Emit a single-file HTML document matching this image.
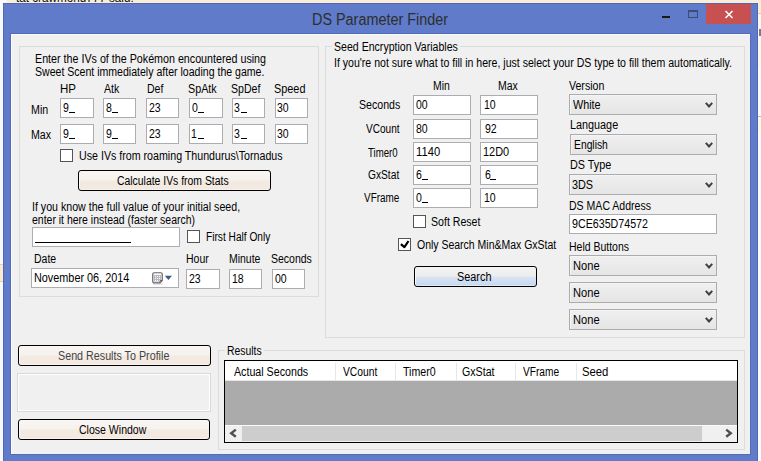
<!DOCTYPE html>
<html><head><meta charset="utf-8">
<style>
*{box-sizing:border-box;margin:0;padding:0}
html,body{width:761px;height:461px;overflow:hidden;background:#f9f9fa;font-family:"Liberation Sans",sans-serif;font-size:12px;color:#000}
.a{position:absolute}
.t{position:absolute;white-space:pre;line-height:14px;font-size:12px;transform-origin:0 0}
.tb{position:absolute;background:#fff;border:1px solid #abadb3;height:20px}
.cb{position:absolute;height:21px;border:1px solid #acacac;background:linear-gradient(#f0f0f0,#e5e5e5);box-shadow:inset 1px 1px 0 #f5f5f5}
.cb svg{position:absolute;right:3px;top:7px}
.gb{position:absolute;border:1px solid #dcdcdc}
.btn{position:absolute;height:21px;border:1px solid #000;border-radius:3px;background:linear-gradient(#f8f6f3,#f6f2ee 48%,#f3eae2 52%,#f3e9e0 92%,#fbf7f2);box-shadow:inset 1px 0 0 #fcfaf8}
.chk{position:absolute;width:13px;height:13px;border:1px solid #555;background:#fff}
</style></head><body>
<!-- background strips -->
<div class="a" style="left:7px;top:0;width:754px;height:14px;background:#fbecd8"></div>
<div class="a" style="left:758px;top:13px;width:3px;height:448px;background:#f9fafb"></div><div class="a" style="left:758px;top:13px;width:3px;height:1px;background:#f1c48c"></div><div class="a" style="left:758px;top:14px;width:3px;height:53px;background:#fdf6ec"></div><div class="a" style="left:759px;top:29px;width:2px;height:7px;background:#7a7890"></div><div class="a" style="left:758px;top:116px;width:3px;height:1px;background:#bbb"></div><div class="a" style="left:758px;top:117px;width:3px;height:14px;background:#fbf8e8"></div><div class="a" style="left:0;top:0;width:7px;height:264px;background:#f9f9fa"></div><div class="a" style="left:0;top:264px;width:3px;height:18px;background:#fbe9d2;border-top:1px solid #f2c890;border-bottom:1px solid #f2c890"></div>
<div class="t" style="left:16px;top:-9px;color:#111;font-size:13px;transform:scaleX(0.9)">tat crawmond777 said: </div>
<!-- frame -->
<div class="a" style="left:3px;top:3px;width:755px;height:470px;background:#5f7bc9;border:1px solid #4d68b5"></div>
<div class="a" style="left:10px;top:33px;width:741px;height:422px;background:#4f6cba"></div>
<div class="a" style="left:11px;top:34px;width:739px;height:420px;background:#f0f0f0;border-left:1px solid #fbfbfb;border-top:1px solid #fbfbfb"></div>
<div class="a" style="left:312px;top:10px;font-size:16px;transform:scaleX(0.9);transform-origin:0 0;color:#2e2e2e;white-space:pre;line-height:20px">DS Parameter Finder</div>
<div class="a" style="left:662px;top:16px;width:8px;height:2px;background:#1c1a14"></div>
<div class="a" style="left:688px;top:10px;width:10px;height:8px;border:1px solid #3d4c72;border-top-width:2px"></div>
<div class="a" style="left:706px;top:4px;width:45px;height:20px;background:#c75050"></div>
<svg class="a" style="left:724px;top:10px" width="10" height="9" viewBox="0 0 10 9"><path d="M1.5 1 L8.5 8 M8.5 1 L1.5 8" stroke="#fff" stroke-width="1.6"/></svg>

<!-- left group -->
<div class="gb" style="left:19px;top:46px;width:300px;height:251px"></div>
<div class="tb" style="left:60px;top:98px;width:34px"></div>
<div class="tb" style="left:103px;top:98px;width:33px"></div>
<div class="tb" style="left:146px;top:98px;width:33px"></div>
<div class="tb" style="left:189px;top:98px;width:34px"></div>
<div class="tb" style="left:232px;top:98px;width:33px"></div>
<div class="tb" style="left:275px;top:98px;width:33px"></div>
<div class="tb" style="left:60px;top:124px;width:34px"></div>
<div class="tb" style="left:103px;top:124px;width:33px"></div>
<div class="tb" style="left:146px;top:124px;width:33px"></div>
<div class="tb" style="left:189px;top:124px;width:34px"></div>
<div class="tb" style="left:232px;top:124px;width:33px"></div>
<div class="tb" style="left:275px;top:124px;width:33px"></div>
<div class="chk" style="left:60px;top:149px"></div>
<div class="btn" style="left:78px;top:170px;width:193px"></div>
<div class="tb" style="left:32px;top:227px;width:148px"></div>
<div class="chk" style="left:187px;top:230px"></div>
<div class="tb" style="left:31px;top:268px;width:148px">
<svg class="a" style="left:120px;top:3px" width="22" height="14" viewBox="0 0 22 14"><rect x="1" y="11.5" width="10" height="1.5" fill="#e6e6e6"/><path d="M2.2 0.75 H8.8 Q10.25 0.75 10.25 2.2 V8.6 L8.1 10.9 H2.2 Q0.75 10.9 0.75 9.45 V2.2 Q0.75 0.75 2.2 0.75 Z" fill="#f7f9fc" stroke="#6e625e" stroke-width="1.2"/><rect x="2" y="3" width="7" height="6.5" fill="#b3bac5"/><g fill="#fff"><rect x="3" y="4" width="1" height="1"/><rect x="5" y="4" width="1" height="1"/><rect x="7" y="4" width="1" height="1"/><rect x="3" y="6" width="1" height="1"/><rect x="5" y="6" width="1" height="1"/><rect x="7" y="6" width="1" height="1"/><rect x="3" y="8" width="1" height="1"/><rect x="5" y="8" width="1" height="1"/><rect x="7" y="8" width="1" height="1"/></g><path d="M8 10.5 L8 8.5 L10 8.5" fill="none" stroke="#6e625e" stroke-width="1"/><path d="M12.8 3.8 L20 3.8 L16.4 8 Z" fill="#3d5a8a"/></svg></div>
<div class="tb" style="left:186px;top:269px;width:34px"></div>
<div class="tb" style="left:229px;top:269px;width:33px"></div>
<div class="tb" style="left:272px;top:269px;width:33px"></div>

<!-- right group -->
<div class="gb" style="left:325px;top:46px;width:420px;height:292px"></div>
<div class="a" style="left:332px;top:40px;width:128px;height:12px;background:#f0f0f0"></div>
<div class="tb" style="left:413px;top:95px;width:58px"></div>
<div class="tb" style="left:413px;top:119px;width:58px"></div>
<div class="tb" style="left:413px;top:142px;width:58px"></div>
<div class="tb" style="left:413px;top:165px;width:58px"></div>
<div class="tb" style="left:413px;top:188px;width:58px"></div>
<div class="tb" style="left:480px;top:95px;width:58px"></div>
<div class="tb" style="left:480px;top:119px;width:58px"></div>
<div class="tb" style="left:480px;top:142px;width:58px"></div>
<div class="tb" style="left:480px;top:165px;width:58px"></div>
<div class="tb" style="left:480px;top:188px;width:58px"></div>
<div class="chk" style="left:413px;top:215px"></div>
<div class="chk" style="left:398px;top:238px"><svg class="a" style="left:1px;top:1px" width="11" height="11" viewBox="0 0 11 11"><path d="M0.9 4.1 L4.4 7.1 L8.5 1.0" fill="none" stroke="#000" stroke-width="2.2" stroke-linejoin="round"/></svg></div>
<div class="btn" style="left:414px;top:266px;width:123px;background:linear-gradient(#f4f3f2,#ededed 48%,#dbe5f3 52%,#c7daf1 92%,#e4eefb)"></div>

<div class="cb" style="left:569px;top:94px;width:148px"><svg width="8" height="6" viewBox="0 0 8 6"><path d="M0.8 0.8 L4 4.5 L7.2 0.8" fill="none" stroke="#404040" stroke-width="2"/></svg></div>
<div class="cb" style="left:570px;top:134px;width:147px"><svg width="8" height="6" viewBox="0 0 8 6"><path d="M0.8 0.8 L4 4.5 L7.2 0.8" fill="none" stroke="#404040" stroke-width="2"/></svg></div>
<div class="cb" style="left:569px;top:174px;width:148px"><svg width="8" height="6" viewBox="0 0 8 6"><path d="M0.8 0.8 L4 4.5 L7.2 0.8" fill="none" stroke="#404040" stroke-width="2"/></svg></div>
<div class="tb" style="left:569px;top:214px;width:148px"></div>
<div class="cb" style="left:569px;top:255px;width:148px"><svg width="8" height="6" viewBox="0 0 8 6"><path d="M0.8 0.8 L4 4.5 L7.2 0.8" fill="none" stroke="#404040" stroke-width="2"/></svg></div>
<div class="cb" style="left:569px;top:282px;width:148px"><svg width="8" height="6" viewBox="0 0 8 6"><path d="M0.8 0.8 L4 4.5 L7.2 0.8" fill="none" stroke="#404040" stroke-width="2"/></svg></div>
<div class="cb" style="left:569px;top:309px;width:148px"><svg width="8" height="6" viewBox="0 0 8 6"><path d="M0.8 0.8 L4 4.5 L7.2 0.8" fill="none" stroke="#404040" stroke-width="2"/></svg></div>

<!-- bottom -->
<div class="btn" style="left:18px;top:345px;width:193px"></div>
<div class="a" style="left:17px;top:373px;width:194px;height:39px;border:1px solid #d9d9d9;box-shadow:inset 0 0 0 1px #fff"></div>
<div class="btn" style="left:18px;top:419px;width:192px"></div>

<div class="gb" style="left:218px;top:350px;width:527px;height:100px"></div>
<div class="a" style="left:225px;top:344px;width:39px;height:12px;background:#f0f0f0"></div>
<div class="a" style="left:224px;top:360px;width:514px;height:83px;border:1px solid #000;background:#ababab;overflow:hidden">
  <div class="a" style="left:0;top:0;width:512px;height:20px;background:#fff;border-bottom:1px solid #e5e5e5"></div>
  <div class="a" style="left:110px;top:2px;width:1px;height:17px;background:#e3e8ef"></div>
  <div class="a" style="left:170px;top:2px;width:1px;height:17px;background:#e3e8ef"></div>
  <div class="a" style="left:231px;top:2px;width:1px;height:17px;background:#e3e8ef"></div>
  <div class="a" style="left:290px;top:2px;width:1px;height:17px;background:#e3e8ef"></div>
  <div class="a" style="left:351px;top:2px;width:1px;height:17px;background:#e3e8ef"></div>
  <div class="a" style="left:0;top:64px;width:512px;height:17px;background:#f0f0f0;border-top:1px solid #fbfbfb"></div>
  <div class="a" style="left:17px;top:65px;width:460px;height:15px;background:#cdcdcd"></div>
  <svg class="a" style="left:3px;top:67px" width="10" height="11" viewBox="0 0 10 11"><path d="M7.8 1.6 L3.2 5.2 L7.8 8.8" fill="none" stroke="#505050" stroke-width="2.4"/></svg>
  <svg class="a" style="left:499px;top:67px" width="10" height="11" viewBox="0 0 10 11"><path d="M2.2 1.6 L6.8 5.2 L2.2 8.8" fill="none" stroke="#505050" stroke-width="2.4"/></svg>
</div>
<div class="t" style="left:34.71px;top:52px;transform:scaleX(0.8926)">Enter the IVs of the Pokémon encountered using</div>
<div class="t" style="left:34.62px;top:65px;transform:scaleX(0.8795)">Sweet Scent immediately after loading the game.</div>
<div class="t" style="left:59.94px;top:82px;transform:scaleX(0.9600)">HP</div>
<div class="t" style="left:104.20px;top:82px;transform:scaleX(0.8824)">Atk</div>
<div class="t" style="left:146.72px;top:82px;transform:scaleX(0.8778)">Def</div>
<div class="t" style="left:188.40px;top:82px;transform:scaleX(0.8968)">SpAtk</div>
<div class="t" style="left:231.12px;top:82px;transform:scaleX(0.8788)">SpDef</div>
<div class="t" style="left:274.29px;top:82px;transform:scaleX(0.9061)">Speed</div>
<div class="t" style="left:31.31px;top:103px;transform:scaleX(0.8889)">Min</div>
<div class="t" style="left:31.31px;top:128px;transform:scaleX(0.8864)">Max</div>
<div class="t" style="left:79.11px;top:149px;transform:scaleX(0.8882)">Use IVs from roaming Thundurus\Tornadus</div>
<div class="t" style="left:117.40px;top:174px;transform:scaleX(0.8674)">Calculate IVs from Stats</div>
<div class="t" style="left:31.61px;top:200px;transform:scaleX(0.8863)">If you know the full value of your initial seed,</div>
<div class="t" style="left:32.00px;top:213px;transform:scaleX(0.8731)">enter it here instead (faster search)</div>
<div class="t" style="left:205.95px;top:230px;transform:scaleX(0.8467)">First Half Only</div>
<div class="t" style="left:33.62px;top:252px;transform:scaleX(0.8750)">Date</div>
<div class="t" style="left:185.72px;top:252px;transform:scaleX(0.8750)">Hour</div>
<div class="t" style="left:228.73px;top:252px;transform:scaleX(0.8714)">Minute</div>
<div class="t" style="left:270.88px;top:252px;transform:scaleX(0.8750)">Seconds</div>
<div class="t" style="left:33.60px;top:271px;transform:scaleX(0.9038)">November 06, 2014</div>
<div class="t" style="left:333.92px;top:40px;transform:scaleX(0.8813)">Seed Encryption Variables</div>
<div class="t" style="left:333.62px;top:56px;transform:scaleX(0.8800)">If you're not sure what to fill in here, just select your DS type to fill them automatically.</div>
<div class="t" style="left:432.83px;top:79px;transform:scaleX(0.8722)">Min</div>
<div class="t" style="left:498.13px;top:79px;transform:scaleX(0.8727)">Max</div>
<div class="t" style="left:358.62px;top:98px;transform:scaleX(0.8826)">Seconds</div>
<div class="t" style="left:365.50px;top:122px;transform:scaleX(0.8375)">VCount</div>
<div class="t" style="left:367.50px;top:146px;transform:scaleX(0.8027)">Timer0</div>
<div class="t" style="left:367.50px;top:168px;transform:scaleX(0.8514)">GxStat</div>
<div class="t" style="left:364.40px;top:191px;transform:scaleX(0.8286)">VFrame</div>
<div class="t" style="left:431.42px;top:215px;transform:scaleX(0.8818)">Soft Reset</div>
<div class="t" style="left:416.50px;top:238px;transform:scaleX(0.8736)">Only Search Min&amp;Max GxStat</div>
<div class="t" style="left:457.39px;top:270px;transform:scaleX(0.9056)">Search</div>
<div class="t" style="left:568.90px;top:79px;transform:scaleX(0.8821)">Version</div>
<div class="t" style="left:573.30px;top:98px;transform:scaleX(0.9000)">White</div>
<div class="t" style="left:569.60px;top:118px;transform:scaleX(0.9019)">Language</div>
<div class="t" style="left:573.74px;top:138px;transform:scaleX(0.8605)">English</div>
<div class="t" style="left:569.60px;top:158px;transform:scaleX(0.9022)">DS Type</div>
<div class="t" style="left:572.40px;top:178px;transform:scaleX(0.9045)">3DS</div>
<div class="t" style="left:569.42px;top:199px;transform:scaleX(0.8783)">DS MAC Address</div>
<div class="t" style="left:572.20px;top:217px;transform:scaleX(0.8894)">9CE635D74572</div>
<div class="t" style="left:569.13px;top:240px;transform:scaleX(0.8735)">Held Buttons</div>
<div class="t" style="left:572.57px;top:259px;transform:scaleX(0.9259)">None</div>
<div class="t" style="left:572.57px;top:286px;transform:scaleX(0.9259)">None</div>
<div class="t" style="left:572.57px;top:313px;transform:scaleX(0.9259)">None</div>
<div class="t" style="left:57.51px;top:349px;transform:scaleX(0.8943);color:#444">Send Results To Profile</div>
<div class="t" style="left:78.50px;top:423px;transform:scaleX(0.8779)">Close Window</div>
<div class="t" style="left:226.73px;top:344px;transform:scaleX(0.8667)">Results</div>
<div class="t" style="left:234.20px;top:365px;transform:scaleX(0.8892)">Actual Seconds</div>
<div class="t" style="left:343.00px;top:365px;transform:scaleX(0.8575)">VCount</div>
<div class="t" style="left:402.90px;top:365px;transform:scaleX(0.8838)">Timer0</div>
<div class="t" style="left:462.00px;top:365px;transform:scaleX(0.8865)">GxStat</div>
<div class="t" style="left:523.10px;top:365px;transform:scaleX(0.8452)">VFrame</div>
<div class="t" style="left:582.46px;top:365px;transform:scaleX(0.9423)">Seed</div>
<div class="t" style="left:63.20px;top:101px;transform:scaleX(0.8750)">9</div>
<div class="t" style="left:106.20px;top:101px;transform:scaleX(0.8750)">8</div>
<div class="t" style="left:149.20px;top:101px;transform:scaleX(0.8750)">23</div>
<div class="t" style="left:192.20px;top:101px;transform:scaleX(0.8750)">0</div>
<div class="t" style="left:234.32px;top:101px;transform:scaleX(0.8750)">3</div>
<div class="t" style="left:277.32px;top:101px;transform:scaleX(0.8750)">30</div>
<div class="t" style="left:63.20px;top:127px;transform:scaleX(0.8750)">9</div>
<div class="t" style="left:106.20px;top:127px;transform:scaleX(0.8750)">9</div>
<div class="t" style="left:149.20px;top:127px;transform:scaleX(0.8750)">23</div>
<div class="t" style="left:191.32px;top:127px;transform:scaleX(0.8750)">1</div>
<div class="t" style="left:234.32px;top:127px;transform:scaleX(0.8750)">3</div>
<div class="t" style="left:277.32px;top:127px;transform:scaleX(0.8750)">30</div>
<div class="t" style="left:189.20px;top:272px;transform:scaleX(0.8750)">23</div>
<div class="t" style="left:232.12px;top:272px;transform:scaleX(0.8750)">18</div>
<div class="t" style="left:275.20px;top:272px;transform:scaleX(0.8750)">00</div>
<div class="t" style="left:416.20px;top:98px;transform:scaleX(0.8750)">00</div>
<div class="t" style="left:416.20px;top:122px;transform:scaleX(0.8750)">80</div>
<div class="t" style="left:415.56px;top:145px;transform:scaleX(0.9360)">1140</div>
<div class="t" style="left:416.20px;top:168px;transform:scaleX(0.8750)">6</div>
<div class="t" style="left:416.20px;top:191px;transform:scaleX(0.8750)">0</div>
<div class="t" style="left:483.93px;top:98px;transform:scaleX(0.8750)">10</div>
<div class="t" style="left:484.80px;top:122px;transform:scaleX(0.8750)">92</div>
<div class="t" style="left:483.39px;top:145px;transform:scaleX(0.9111)">12D0</div>
<div class="t" style="left:484.80px;top:168px;transform:scaleX(0.8750)">6</div>
<div class="t" style="left:483.93px;top:191px;transform:scaleX(0.8750)">10</div>
<div class="a" style="left:69px;top:112px;width:6px;height:1px;background:#000"></div>
<div class="a" style="left:112px;top:112px;width:6px;height:1px;background:#000"></div>
<div class="a" style="left:198px;top:112px;width:6px;height:1px;background:#000"></div>
<div class="a" style="left:241px;top:112px;width:6px;height:1px;background:#000"></div>
<div class="a" style="left:69px;top:138px;width:6px;height:1px;background:#000"></div>
<div class="a" style="left:112px;top:138px;width:6px;height:1px;background:#000"></div>
<div class="a" style="left:198px;top:138px;width:6px;height:1px;background:#000"></div>
<div class="a" style="left:241px;top:138px;width:6px;height:1px;background:#000"></div>
<div class="a" style="left:422px;top:179px;width:6px;height:1px;background:#000"></div>
<div class="a" style="left:422px;top:202px;width:6px;height:1px;background:#000"></div>
<div class="a" style="left:490px;top:179px;width:6px;height:1px;background:#000"></div>
<div class="a" style="left:35px;top:242px;width:96px;height:1px;background:#000"></div>
</body></html>
